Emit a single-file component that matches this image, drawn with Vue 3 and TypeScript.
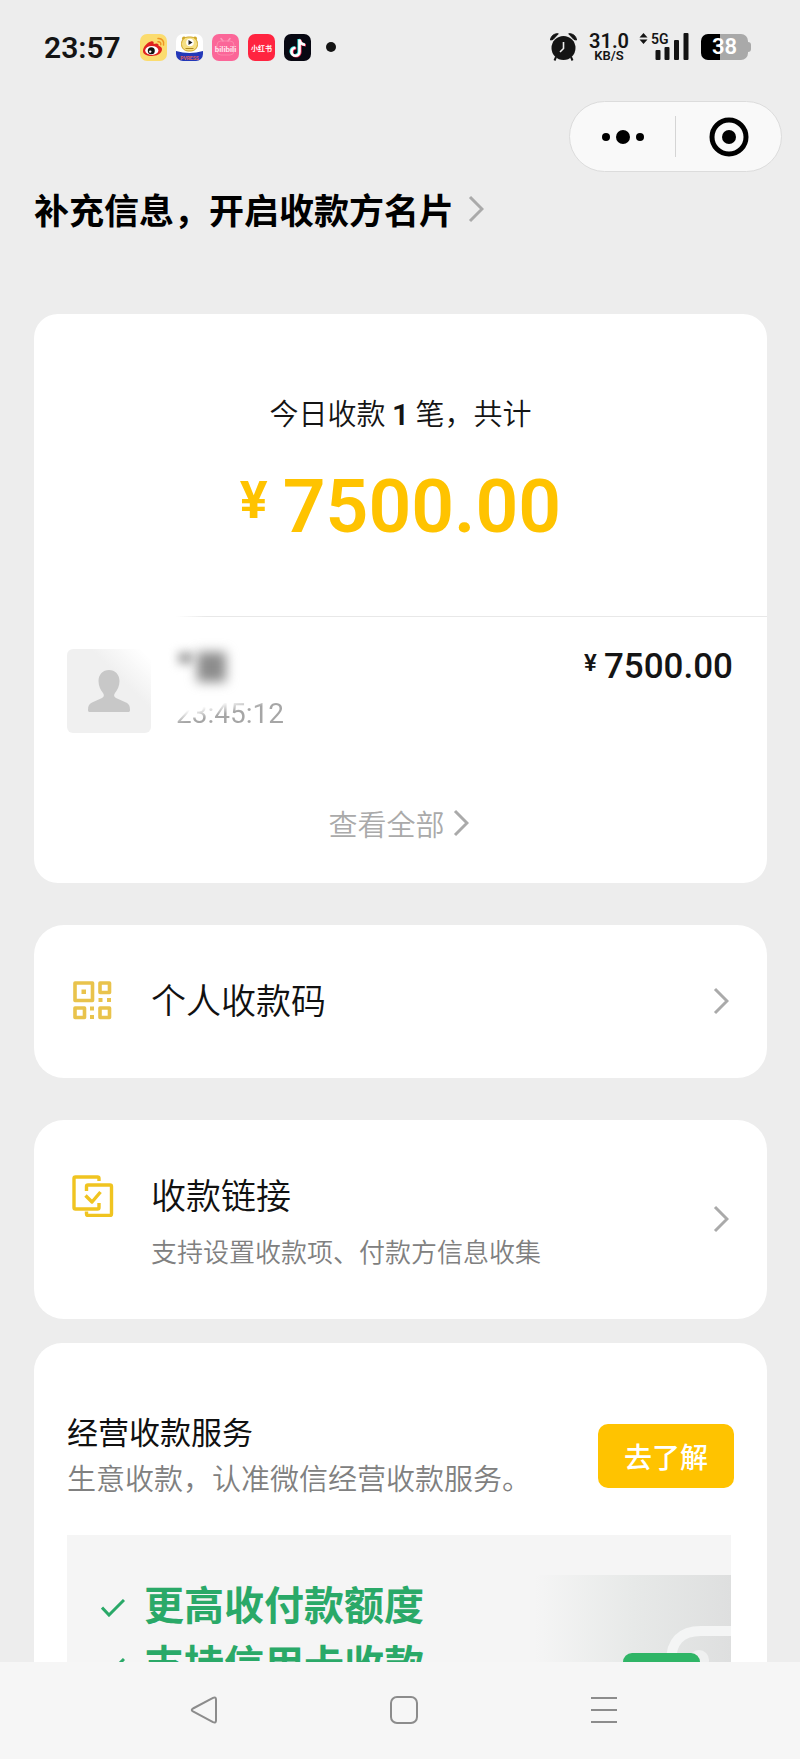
<script setup lang="ts">
interface Entry {
  id: string
  title: string
  note?: string
}

const entries: Entry[] = [
  { id: 'code', title: '个人收款码' },
  { id: 'link', title: '收款链接', note: '支持设置收款项、付款方信息收集' },
]

const benefits: string[] = ['更高收付款额度', '支持信用卡收款']
</script>

<template>
  <div class="screen">
    <header class="status">
      <div class="status-left">
        <time class="clock">23:57</time>
        <div class="apps">
          <svg class="app" viewBox="0 0 27 27" aria-label="微博">
            <rect width="27" height="27" rx="7" fill="#fbdc6f" />
            <path d="M3 17c0-4 4-8.500 8-9.500 2.500-.6 3 1 2.600 2.500 2.500-1 5.400-1 5 1.800 2.600.7 3.900 2.200 3.300 4.500C21 20 16.500 22 11.800 22 7 22 3 20.500 3 17z" fill="#e0221f" />
            <ellipse cx="11.800" cy="16.400" rx="6.600" ry="4.500" fill="#fff" />
            <circle cx="11.300" cy="16.800" r="3.500" fill="#111" />
            <circle cx="10.200" cy="17.600" r="1.200" fill="#fff" />
            <path d="M18 4.500c4-.5 6.500 3 5.500 6.500M18 7.800c2.200-.2 3.200 1.200 2.700 3" fill="none" stroke="#ee9323" stroke-width="1.500" stroke-linecap="round" />
          </svg>
          <svg class="app" viewBox="0 0 27 27" aria-label="视频">
            <defs>
              <clipPath id="app-round"><rect width="27" height="27" rx="7" /></clipPath>
            </defs>
            <g clip-path="url(#app-round)">
              <rect width="27" height="27" fill="#fff" />
              <path d="M0 17q13.500 4 27 0v10H0z" fill="#2338b8" />
              <circle cx="8" cy="4.500" r="2" fill="#cfa72a" />
              <circle cx="19" cy="4.500" r="2" fill="#cfa72a" />
              <rect x="5.500" y="3" width="16" height="14" rx="6.500" fill="#f5df83" stroke="#cfa72a" />
              <circle cx="14" cy="8.500" r="3.800" fill="#fff" />
              <path d="M12.500 6l4 2.500-4 2.500z" fill="#222" />
              <path d="M9.500 14.500h8" stroke="#b08a20" />
              <text x="13.500" y="25.500" text-anchor="middle" font-size="5" font-weight="700" fill="#e0605c">PVRESS</text>
            </g>
          </svg>
          <svg class="app" viewBox="0 0 27 27" aria-label="哔哩哔哩">
            <rect width="27" height="27" rx="7" fill="#fb6698" />
            <path d="M9 4.500l2 2.500M18 4.500L16 7" stroke="#fd9dbd" stroke-width="1.500" stroke-linecap="round" />
            <rect x="5" y="7" width="17" height="14" rx="4" fill="none" stroke="#fc86ab" />
            <text x="13.500" y="17.500" text-anchor="middle" font-size="8" font-weight="700" fill="#ffe3ec">bilibili</text>
          </svg>
          <svg class="app" viewBox="0 0 27 27" aria-label="小红书">
            <rect width="27" height="27" rx="7" fill="#ff2440" />
            <text class="cjk" x="13.500" y="16.500" text-anchor="middle" font-size="7" font-weight="700" fill="#fff">小红书</text>
          </svg>
          <svg class="app" viewBox="0 0 27 27" aria-label="抖音">
            <rect width="27" height="27" rx="7" fill="#080812" />
            <g fill="none" stroke-width="2.600">
              <path d="M14.700 5v12.200a4 4 0 1 1-4-4M14.700 5c.4 3.300 2.600 5 5.600 5.200" stroke="#27e3de" />
              <path d="M16.300 6v12.200a4 4 0 1 1-4-4M16.300 6c.4 3.300 2.600 5 5.600 5.200" stroke="#f8335a" />
              <path d="M15.500 5.500v12.200a4 4 0 1 1-4-4M15.500 5.500c.4 3.300 2.600 5 5.600 5.200" stroke="#fff" />
            </g>
          </svg>
        </div>
        <span class="more-dot"></span>
      </div>
      <div class="status-right">
        <svg class="alarm" viewBox="0 0 27 28" aria-label="闹钟">
          <circle cx="13.500" cy="15" r="12" fill="#141414" />
          <path d="M1 7.500A7 7 0 0 1 8.500 1M26 7.500A7 7 0 0 0 18.500 1" fill="none" stroke="#ededed" stroke-width="4" />
          <path d="M.5 7C.8 3 4.500.2 8.300.8L3 6.500zM26.500 7C26.200 3 22.500.2 18.700.8L24 6.500z" fill="#141414" stroke="#141414" stroke-linejoin="round" />
          <path d="M6 24l-1.500 3.500M21 24l1.500 3.500" stroke="#141414" stroke-width="2" />
          <path d="M13.500 9v6.500L10 19" fill="none" stroke="#ededed" stroke-width="1.600" />
        </svg>
        <div class="speed">
          <span class="speed-value">31.0</span>
          <span class="speed-unit">KB/S</span>
        </div>
        <svg class="signal" viewBox="0 0 50 28" aria-label="5G">
          <path d="M4.500 0l4 4.600h-8zM4.500 11l4-4.600h-8z" fill="#141414" />
          <text x="12" y="11" font-size="14" font-weight="600" fill="#141414">5G</text>
          <g fill="#141414">
            <rect x="16.500" y="17" width="5" height="10" rx="1" />
            <rect x="25.500" y="14" width="5" height="13" rx="1" />
            <rect x="35" y="7" width="5" height="20" rx="1" />
            <rect x="44.500" y="0" width="5" height="27" rx="1" />
          </g>
        </svg>
        <div class="battery"><span class="battery-level">38</span></div>
      </div>
    </header>

    <main class="content">
      <div class="capsule">
        <button class="capsule-button" type="button" aria-label="更多">
          <svg width="42" height="14" viewBox="0 0 42 14">
            <circle cx="4" cy="7" r="4" />
            <circle cx="21" cy="7" r="7" />
            <circle cx="38" cy="7" r="4" />
          </svg>
        </button>
        <button class="capsule-button" type="button" aria-label="关闭">
          <svg width="40" height="40" viewBox="0 0 40 40">
            <circle cx="20" cy="20" r="17" fill="none" stroke="#000" stroke-width="5" />
            <circle cx="20" cy="20" r="7" />
          </svg>
        </button>
      </div>

      <a class="profile-link" href="#">
        <span>补充信息，开启收款方名片</span>
        <svg class="chevron" viewBox="0 0 16 28"><path d="M2 2l12 12L2 26" /></svg>
      </a>

      <section class="card summary">
        <p class="summary-caption">今日收款 <b>1</b> 笔，共计</p>
        <p class="summary-total"><span class="yen">¥</span>7500.00</p>
        <div class="record">
          <div class="avatar">
            <svg width="44" height="44" viewBox="0 0 44 44">
              <path d="M22 1c6 0 10.500 4.500 10.500 11 0 5-2 9-4.500 12-1.500 2-1 4 1 5l10 4.500c3 1.500 4 3.500 4 7.500 0 1.500-.5 2-2 2H3c-1.500 0-2-.5-2-2 0-4 1-6 4-7.500L15 29c2-1 2.500-3 1-5-2.500-3-4.500-7-4.500-12C11.500 5.500 16 1 22 1z" />
            </svg>
          </div>
          <div class="payer">
            <div class="payer-name" aria-label="姓名已隐藏">
              <span class="smudge-small"></span>
              <span class="smudge-large"></span>
            </div>
            <time class="payer-time">23:45:12</time>
          </div>
          <p class="record-amount"><span class="yen">¥</span>7500.00</p>
        </div>
        <a class="see-all" href="#">
          <span>查看全部</span>
          <svg class="chevron" viewBox="0 0 16 28"><path d="M2 2l12 12L2 26" /></svg>
        </a>
      </section>

      <a v-for="entry in entries" :key="entry.id" class="card entry" :class="entry.id" href="#">
        <svg v-if="entry.id === 'code'" class="entry-icon" viewBox="0 0 42 42">
          <g fill="none" stroke="#e9c34c" stroke-width="3.600" stroke-linejoin="round">
            <rect x="3" y="3" width="17.500" height="17.500" />
            <rect x="28" y="3" width="9.500" height="9.500" />
            <rect x="3" y="28" width="9.500" height="9.500" />
            <rect x="28" y="28" width="9.500" height="9.500" />
          </g>
          <g fill="#e9c34c">
            <rect x="9.500" y="9.500" width="4.500" height="4.500" />
            <rect x="26.500" y="18" width="4" height="4" />
            <rect x="35" y="18" width="4" height="4" />
            <rect x="18" y="26.500" width="4" height="4" />
            <rect x="18" y="35" width="4" height="4" />
          </g>
        </svg>
        <svg v-else class="entry-icon" viewBox="0 0 42 42">
          <g fill="none" stroke="#f0c420" stroke-width="3.400" stroke-linejoin="round">
            <path d="M27 6V3.500q0-1.500-1.500-1.500h-22Q2 2 2 3.500v29Q2 34 3.500 34h22q1.500 0 1.500-1.500V28" />
            <path d="M14.500 16v-4.500q0-1.500 1.500-1.500h22q1.500 0 1.500 1.500V39q0 1.500-1.500 1.500H16q-1.500 0-1.500-1.500v-2.500" />
            <path d="M13.500 20.500l6.500 6.500 8.500-10" />
          </g>
        </svg>
        <div class="entry-text">
          <span class="entry-title">{{ entry.title }}</span>
          <span v-if="entry.note" class="entry-note">{{ entry.note }}</span>
        </div>
        <svg class="chevron" viewBox="0 0 16 28"><path d="M2 2l12 12L2 26" /></svg>
      </a>

      <section class="card service">
        <div class="service-head">
          <div class="service-text">
            <h2 class="service-title">经营收款服务</h2>
            <p class="service-note">生意收款，认准微信经营收款服务。</p>
          </div>
          <button class="learn" type="button">去了解</button>
        </div>
        <div class="banner">
          <ul class="benefits">
            <li v-for="item in benefits" :key="item" class="benefit">
              <svg width="24" height="18" viewBox="0 0 24 18"><path d="M1 8.500L8 16 23 1" /></svg>
              <span>{{ item }}</span>
            </li>
          </ul>
          <svg class="art" viewBox="0 0 196 160">
            <defs>
              <linearGradient id="art-fade" x1="0" x2="1" y1="0" y2="0">
                <stop offset="0" stop-color="#f5f5f5" />
                <stop offset="0.500" stop-color="#e7e9e8" />
                <stop offset="1" stop-color="#dedfdf" />
              </linearGradient>
            </defs>
            <rect width="196" height="160" fill="url(#art-fade)" />
            <path d="M136 100V87q0-31 30-31h40" fill="none" stroke="#f4f5f5" stroke-width="10" />
            <circle cx="164" cy="85" r="10" fill="#eff0f0" />
            <rect x="88" y="78" width="77" height="60" rx="9" fill="#2fb566" />
          </svg>
        </div>
      </section>
    </main>

    <nav class="system-nav">
      <button class="nav-button" type="button" aria-label="返回">
        <svg width="28" height="28" viewBox="0 0 28 28"><path d="M3 12.500L23 1.800q3-1.300 3 1.700v21q0 3-3 1.700L3 15.500q-2.500-1.500 0-3z" /></svg>
      </button>
      <button class="nav-button" type="button" aria-label="主页">
        <svg width="28" height="28" viewBox="0 0 28 28"><rect x="1" y="1" width="26" height="26" rx="6" /></svg>
      </button>
      <button class="nav-button" type="button" aria-label="最近任务">
        <svg width="28" height="28" viewBox="0 0 28 28"><path d="M1 2h26M1 14h26M1 26h26" /></svg>
      </button>
    </nav>
  </div>
</template>

<style>
body {
  margin: 0;
  background: #ededed;
}
</style>

<style scoped>
.screen {
  display: flex;
  flex-direction: column;
  height: 100vh;
  overflow: hidden;
  background: #ededed;
  color: #141414;
  font-family: "Noto Sans CJK SC", "Noto Sans", sans-serif;
}

.screen *,
.screen {
  box-sizing: border-box;
}

p,
h2,
ul {
  margin: 0;
  padding: 0;
}

a {
  color: inherit;
  text-decoration: none;
}

button {
  border: 0;
  padding: 0;
  background: none;
  font-family: inherit;
}

svg {
  display: block;
  flex: none;
}

.chevron {
  width: 16px;
  height: 28px;
  fill: none;
  stroke: #aaa;
  stroke-width: 3;
}

.status {
  display: flex;
  flex: none;
  align-items: center;
  justify-content: space-between;
  height: 94px;
  padding: 0 52px 0 44px;
  font-family: Roboto, sans-serif;
}

.status-left,
.status-right {
  display: flex;
  align-items: center;
}

.clock {
  font-size: 30px;
  font-weight: 600;
}

.apps {
  display: flex;
  gap: 9px;
  margin-left: 19px;
}

.app {
  width: 27px;
  height: 27px;
}

.cjk {
  font-family: "Noto Sans CJK SC", sans-serif;
}

.more-dot {
  width: 10px;
  height: 10px;
  margin-left: 15px;
  border-radius: 50%;
  background: #141414;
}

.alarm {
  width: 27px;
  height: 28px;
}

.speed {
  display: flex;
  flex-direction: column;
  align-items: center;
  margin-left: 12px;
  font-weight: 600;
}

.speed-value {
  font-size: 20px;
  line-height: 16px;
}

.speed-unit {
  font-size: 13px;
  line-height: 13px;
}

.signal {
  width: 50px;
  height: 28px;
  margin-left: 10px;
}

.battery {
  display: flex;
  position: relative;
  align-items: center;
  justify-content: center;
  width: 47px;
  height: 26px;
  margin-left: 12px;
  border-radius: 7px;
  background: linear-gradient(90deg, #000 41%, #a9a9a9 41%);
}

.battery::after {
  content: "";
  position: absolute;
  top: 8px;
  right: -3px;
  width: 3px;
  height: 10px;
  border-radius: 0 3px 3px 0;
  background: #a9a9a9;
}

.battery-level {
  color: #fff;
  font-size: 22px;
  font-weight: 600;
  line-height: 26px;
}

.content {
  display: flex;
  flex: 1;
  flex-direction: column;
  min-height: 0;
  overflow: hidden;
  padding: 7px 33px 0 34px;
}

.content > * {
  flex: none;
}

.capsule {
  display: flex;
  align-self: flex-end;
  width: 213px;
  height: 71px;
  margin-right: -15px;
  border: 1px solid #dcdcdc;
  border-radius: 36px;
  background: #f9f9f9;
}

.capsule-button {
  display: flex;
  flex: 1;
  align-items: center;
  justify-content: center;
}

.capsule-button + .capsule-button {
  margin: 14px 0;
  border-left: 1px solid #d5d5d5;
}

.profile-link {
  display: flex;
  align-items: center;
  gap: 14px;
  margin-top: 13px;
  color: #000;
  font-size: 35px;
  font-weight: 700;
  line-height: 48px;
}

.card {
  border-radius: 30px;
  background: #fff;
}

.summary {
  margin-top: 81px;
  padding: 78px 0 40px;
  border-radius: 24px;
}

.summary-caption {
  font-size: 29px;
  font-weight: 350;
  line-height: 40px;
  text-align: center;
}

.summary-caption b {
  font-family: Roboto, sans-serif;
  font-size: 30px;
  font-weight: 600;
}

.summary-total {
  display: flex;
  align-items: flex-start;
  justify-content: center;
  gap: 15px;
  margin-top: 31px;
  color: #ffc300;
  font-family: Roboto, sans-serif;
  font-size: 75px;
  font-weight: 600;
  line-height: 80px;
}

.summary-total .yen {
  font-size: 52px;
  font-weight: 700;
  line-height: 70px;
}

.record {
  display: flex;
  position: relative;
  margin-top: 70px;
  padding: 33px 34px 0 33px;
}

.record::before {
  content: "";
  position: absolute;
  top: 0;
  right: 0;
  left: 142px;
  height: 1px;
  background: linear-gradient(90deg, #fff, #e8e8e8 30px);
}

.avatar {
  display: flex;
  align-items: center;
  justify-content: center;
  width: 84px;
  height: 84px;
  border-radius: 6px;
  background: linear-gradient(225deg, #fff 6%, #f0f0f0 36%);
}

.avatar svg {
  fill: #c8c8c8;
}

.payer {
  flex: 1;
  margin-left: 25px;
}

.payer-name {
  display: flex;
  align-items: flex-start;
  height: 47px;
  padding: 3px 0 0 2px;
}

.smudge-small {
  width: 15px;
  height: 12px;
  background: #aaa;
  filter: blur(5px);
}

.smudge-large {
  width: 29px;
  height: 30px;
  margin-left: 4px;
  background: #8c8c8c;
  filter: blur(6px);
}

.payer-time {
  display: inline-block;
  background: linear-gradient(168deg, #fff 28%, #a6a6a6 48%);
  background-clip: text;
  color: transparent;
  font-family: Roboto, sans-serif;
  font-size: 28px;
  line-height: 36px;
}

.record-amount {
  display: flex;
  align-items: flex-start;
  gap: 7px;
  font-family: Roboto, sans-serif;
  font-size: 35px;
  font-weight: 500;
  line-height: 36px;
}

.record-amount .yen {
  font-size: 24px;
  font-weight: 600;
  line-height: 28px;
}

.see-all {
  display: flex;
  align-items: center;
  justify-content: center;
  gap: 8px;
  margin-top: 70px;
  padding-right: 4px;
  color: #aaa;
  font-size: 29px;
  font-weight: 350;
  line-height: 40px;
}

.entry {
  display: flex;
  align-items: center;
  margin-top: 42px;
  padding: 51px 38px 52px;
}

.entry-icon {
  width: 42px;
  height: 42px;
}

.entry-text {
  display: flex;
  flex: 1;
  flex-direction: column;
  margin-left: 37px;
  padding-bottom: 4px;
}

.entry-title {
  color: #111;
  font-size: 35px;
  font-weight: 350;
  line-height: 46px;
}

.entry-note {
  margin-top: 16px;
  color: #808080;
  font-size: 26px;
  font-weight: 350;
  line-height: 36px;
}

.link {
  padding: 48px 38px 49px;
}

.link .entry-icon {
  align-self: flex-start;
  margin-top: 7px;
}

.link .entry-text {
  padding: 3px 0 1px;
}

.service {
  margin-top: 24px;
  padding: 65px 33px 0;
  border-radius: 28px;
}

.service-head {
  display: flex;
  align-items: center;
  justify-content: space-between;
}

.service-text {
  padding-bottom: 4px;
}

.service-title {
  color: #111;
  font-size: 31px;
  font-weight: 400;
  line-height: 46px;
}

.service-note {
  color: #808080;
  font-size: 29px;
  font-weight: 350;
  line-height: 46px;
}

.learn {
  width: 136px;
  height: 64px;
  border-radius: 10px;
  background: #ffc300;
  color: #fff;
  font-size: 28px;
  font-weight: 500;
}

.banner {
  display: flex;
  justify-content: space-between;
  height: 200px;
  margin: 31px 3px 0 0;
  background: #f5f5f5;
}

.benefits {
  padding: 39px 0 0 34px;
  list-style: none;
}

.benefit {
  display: flex;
  align-items: center;
  gap: 19px;
  color: #2aa968;
  font-size: 40px;
  font-weight: 700;
  line-height: 59px;
}

.benefit svg {
  margin-top: 8px;
  fill: none;
  stroke: #2aa968;
  stroke-width: 3;
}

.art {
  width: 196px;
  height: 160px;
  margin-top: 40px;
}

.system-nav {
  display: flex;
  flex: none;
  height: 97px;
  padding: 0 12% 2px 13%;
  background: #f6f6f6;
}

.nav-button {
  display: flex;
  flex: 1;
  align-items: center;
  justify-content: center;
}

.nav-button svg {
  fill: none;
  stroke: #8c8c8c;
  stroke-width: 2;
}
</style>
